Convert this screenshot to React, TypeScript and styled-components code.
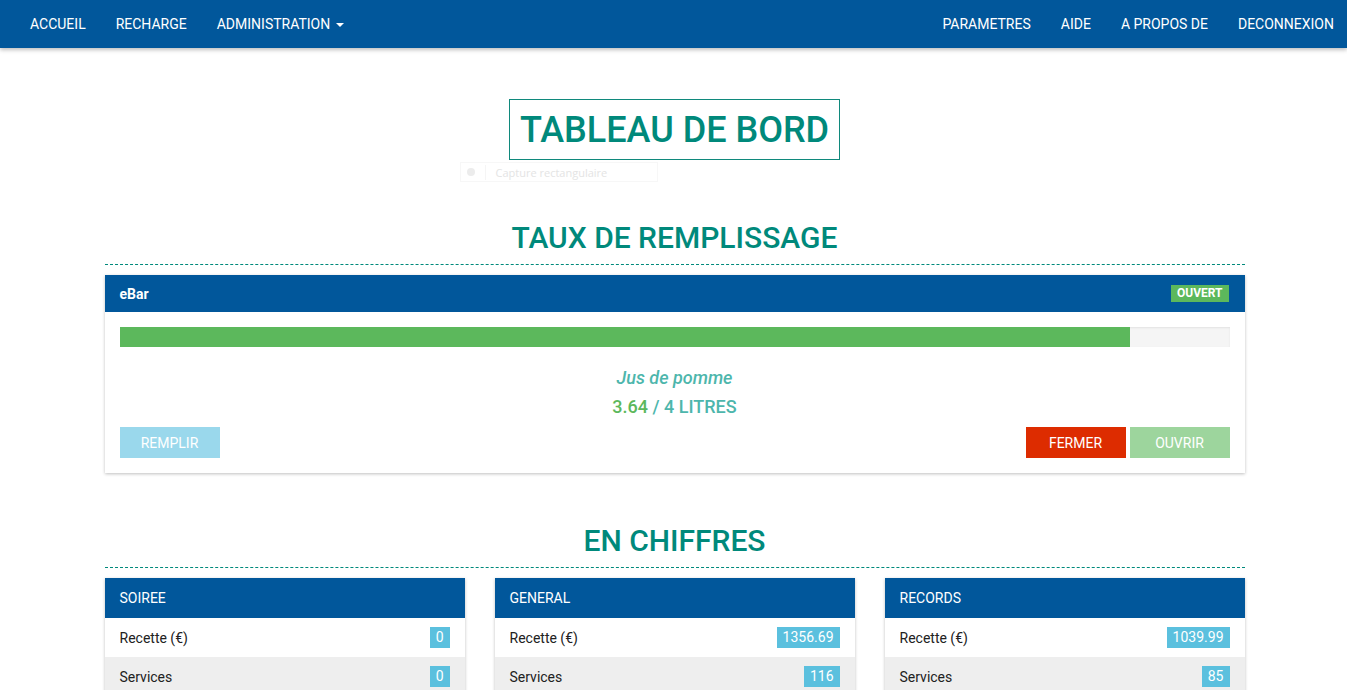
import React from 'react';
import styled, { createGlobalStyle } from 'styled-components';

const BLUE = '#01579b';
const TEAL = '#00897b';

const GlobalStyle = createGlobalStyle`
  html { scrollbar-width: none; }
  html::-webkit-scrollbar { display: none; }
  body {
    margin: 0;
    background: #fff;
    font-family: Roboto, 'Liberation Sans', sans-serif;
    font-size: 14px;
    color: #212121;
  }
`;

const Nav = styled.nav`
  height: 48px;
  background: ${BLUE};
  display: flex;
  justify-content: space-between;
  padding: 1px 0 0 15px;
  box-sizing: border-box;
  box-shadow: 0 2px 4px rgba(0, 0, 0, 0.25);
  position: relative;
  z-index: 2;
`;

const NavGroup = styled.ul`
  display: flex;
  margin: 0;
  padding: 0;
  list-style: none;
  &:last-child {
    padding-right: 13px;
  }
`;

const NavItem = styled.li`
  color: #fff;
  padding: 0 15px;
  line-height: 47px;
  font-size: 14px;
  display: flex;
  align-items: center;
  gap: 6px;
  cursor: pointer;
  &:last-child {
    padding-right: 0;
  }
`;

const Caret = styled.span`
  width: 0;
  height: 0;
  border-top: 4px solid #fff;
  border-left: 4px solid transparent;
  border-right: 4px solid transparent;
`;

const Container = styled.main`
  width: 1140px;
  margin: 0 0 0 calc((100% - 1140px) / 2 + 1px);
  position: relative;
`;

const TitleWrap = styled.div`
  display: flex;
  justify-content: center;
  padding-top: 51px;
`;

const TitleBox = styled.h1`
  margin: 0;
  border: 1px solid #10897c;
  padding: 0 10px;
  height: 59px;
  line-height: 60px;
  font-size: 36px;
  font-weight: 500;
  color: ${TEAL};
`;

const Ghost = styled.div`
  position: absolute;
  left: 355px;
  top: 114px;
  width: 196px;
  height: 18px;
  border: 1px solid #f7f7f7;
  display: flex;
  align-items: center;
  font-family: 'Open Sans', sans-serif;
  font-size: 11px;
  color: #e4e4e4;
  span:first-child {
    width: 8px;
    height: 8px;
    border-radius: 50%;
    background: #ececec;
    margin: 0 10px 0 6px;
  }
  span:last-child {
    border-left: 1px solid #f5f5f5;
    padding-left: 10px;
  }
`;

const SectionTitle = styled.h2<{ $top: number }>`
  margin: ${p => p.$top}px 0 0;
  padding-bottom: 8px;
  text-align: center;
  font-size: 30px;
  font-weight: 500;
  line-height: 36px;
  color: ${TEAL};
  border-bottom: 1px dashed ${TEAL};
`;

const Panel = styled.section`
  margin-top: 10px;
  background: #fff;
  box-shadow: 0 1px 3px rgba(0, 0, 0, 0.25);
`;

const PanelHead = styled.div<{ $h: number; $bold?: boolean }>`
  height: ${p => p.$h}px;
  background: ${BLUE};
  color: #fff;
  display: flex;
  align-items: center;
  justify-content: space-between;
  padding: 0 15px;
  font-weight: ${p => (p.$bold ? 700 : 400)};
  font-size: 14px;
`;

const StatusBadge = styled.span`
  display: inline-block;
  background: #5cb85c;
  color: #fff;
  font-size: 12px;
  font-weight: 700;
  padding: 2px 6px;
  line-height: 13px;
  margin-right: 1px;
`;

const PanelBody = styled.div`
  padding: 15px 15px 15px;
`;

const Track = styled.div`
  height: 20px;
  background: #f5f5f5;
  box-shadow: inset 0 1px 2px rgba(0, 0, 0, 0.08);
`;

const Fill = styled.div`
  height: 100%;
  background: #5cb85c;
`;

const Drink = styled.div`
  text-align: center;
  margin-top: 21px;
  font-size: 18px;
  font-style: italic;
  font-weight: 500;
  color: #4db6ac;
  line-height: 20px;
`;

const Volume = styled.div`
  text-align: center;
  margin-top: 9px;
  font-size: 18px;
  font-weight: 500;
  color: #4db6ac;
  line-height: 20px;
  b {
    color: #5cb85c;
    font-weight: 500;
  }
`;

const Actions = styled.div`
  display: flex;
  justify-content: space-between;
  margin-top: 10px;
`;

const BtnGroup = styled.div`
  display: flex;
  gap: 4px;
`;

const Button = styled.button<{ $bg: string }>`
  width: 100px;
  height: 31px;
  border: none;
  background: ${p => p.$bg};
  color: #fff;
  font-family: Roboto, 'Liberation Sans', sans-serif;
  font-size: 14px;
  cursor: pointer;
`;

const Grid = styled.div`
  display: grid;
  grid-template-columns: repeat(3, 1fr);
  gap: 30px;
`;

const Row = styled.div<{ $alt?: boolean }>`
  height: 39px;
  display: flex;
  align-items: center;
  justify-content: space-between;
  padding: 0 15px;
  background: ${p => (p.$alt ? '#eeeeee' : '#fff')};
  color: #212121;
`;

const Count = styled.span`
  background: #5bc0de;
  color: #fff;
  padding: 1px 6px;
  line-height: 19px;
  font-size: 14px;
`;

const stats = [
  { title: 'SOIREE', recette: '0', services: '0' },
  { title: 'GENERAL', recette: '1356.69', services: '116' },
  { title: 'RECORDS', recette: '1039.99', services: '85' },
];

export default function App() {
  const level = 3.64;
  const capacity = 4;
  return (
    <>
      <GlobalStyle />
      <Nav>
        <NavGroup>
          <NavItem>ACCUEIL</NavItem>
          <NavItem>RECHARGE</NavItem>
          <NavItem>
            ADMINISTRATION <Caret />
          </NavItem>
        </NavGroup>
        <NavGroup>
          <NavItem>PARAMETRES</NavItem>
          <NavItem>AIDE</NavItem>
          <NavItem>A PROPOS DE</NavItem>
          <NavItem>DECONNEXION</NavItem>
        </NavGroup>
      </Nav>
      <Container>
        <TitleWrap>
          <TitleBox>TABLEAU DE BORD</TitleBox>
        </TitleWrap>
        <Ghost>
          <span />
          <span>Capture rectangulaire</span>
        </Ghost>
        <SectionTitle $top={60}>TAUX DE REMPLISSAGE</SectionTitle>
        <Panel>
          <PanelHead $h={37} $bold>
            eBar
            <StatusBadge>OUVERT</StatusBadge>
          </PanelHead>
          <PanelBody>
            <Track>
              <Fill style={{ width: `${(level / capacity) * 100}%` }} />
            </Track>
            <Drink>Jus de pomme</Drink>
            <Volume>
              <b>{level.toFixed(2)}</b> / {capacity} LITRES
            </Volume>
            <Actions>
              <Button $bg="#9ad8ec">REMPLIR</Button>
              <BtnGroup>
                <Button $bg="#dd2c00">FERMER</Button>
                <Button $bg="#9dd59d">OUVRIR</Button>
              </BtnGroup>
            </Actions>
          </PanelBody>
        </Panel>
        <SectionTitle $top={50}>EN CHIFFRES</SectionTitle>
        <Grid>
          {stats.map(s => (
            <Panel key={s.title}>
              <PanelHead $h={40}>{s.title}</PanelHead>
              <Row>
                Recette (€)
                <Count>{s.recette}</Count>
              </Row>
              <Row $alt>
                Services
                <Count>{s.services}</Count>
              </Row>
            </Panel>
          ))}
        </Grid>
      </Container>
    </>
  );
}
